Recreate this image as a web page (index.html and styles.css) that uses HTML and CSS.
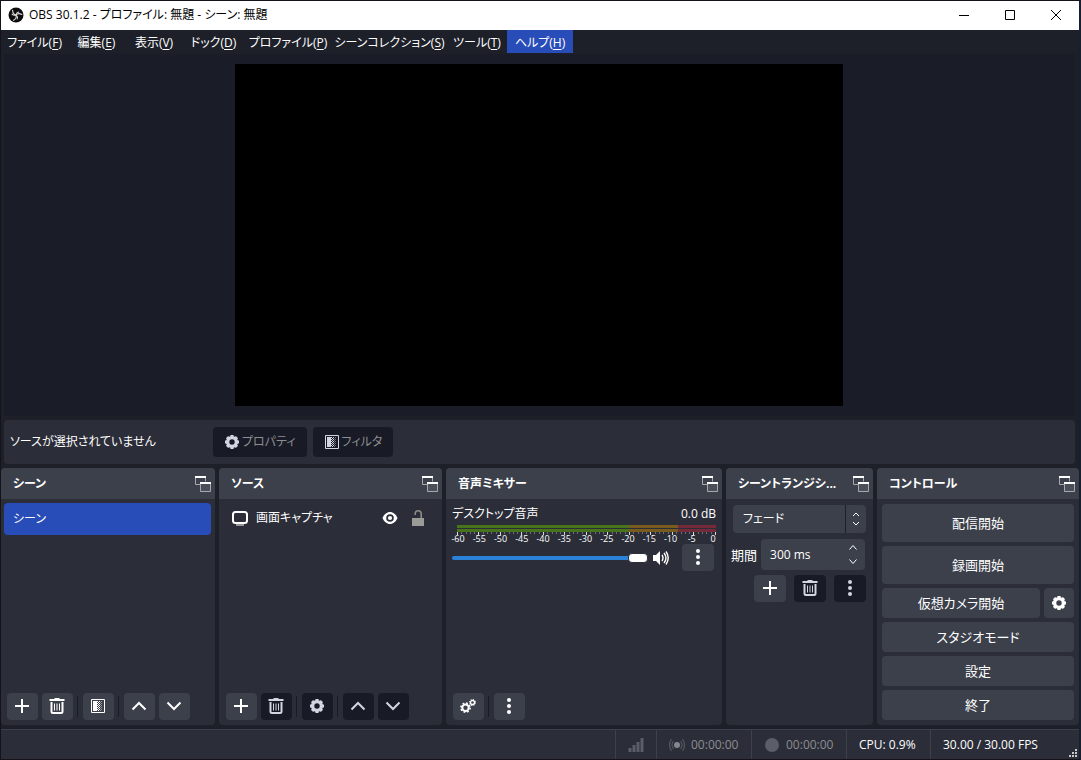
FILE: index.html
```html
<!DOCTYPE html>
<html lang="ja">
<head>
<meta charset="utf-8">
<title>OBS 30.1.2 - プロファイル: 無題 - シーン: 無題</title>
<link rel="stylesheet" href="styles.css">
</head>
<body>
<svg class="sprite" aria-hidden="true">
  <symbol id="plus" viewBox="0 0 16 16"><path d="M8 1v14M1 8h14" fill="none" stroke="currentColor" stroke-width="2"/></symbol>
  <symbol id="trash" viewBox="0 0 16 16"><path d="M.5 2h15M5.500 1h5" fill="none" stroke="currentColor" stroke-width="2"/><path d="M2.500 4v9.500a1.500 1.500 0 0 0 1.500 1.500h8a1.500 1.500 0 0 0 1.500-1.500V4" fill="none" stroke="currentColor" stroke-width="2"/><path d="M5.500 5.500v7M8 5.500v7M10.500 5.500v7" stroke="currentColor"/></symbol>
  <symbol id="filter" viewBox="0 0 16 16"><path d="M1.500 1.500h13v13h-13z" fill="none" stroke="currentColor"/><path d="M3 3h4v10H3z" fill="currentColor"/><path d="M7.500 3v10M9.500 3v10" stroke="currentColor" stroke-dasharray="1 1"/><path d="M8.500 4v9" stroke="currentColor" stroke-dasharray="1 1"/><path d="M10.500 4v9M11.500 3v10" stroke="currentColor" stroke-dasharray="1 1" opacity=".45"/></symbol>
  <symbol id="up" viewBox="0 0 16 16"><path d="M1.500 11.500 8 5l6.500 6.500" fill="none" stroke="currentColor" stroke-width="2"/></symbol>
  <symbol id="down" viewBox="0 0 16 16"><path d="M1.500 4.500 8 11l6.500-6.500" fill="none" stroke="currentColor" stroke-width="2"/></symbol>
  <symbol id="gear" viewBox="0 0 16 16"><circle cx="8" cy="8" r="4.400" fill="none" stroke="currentColor" stroke-width="3.400"/><path d="M8 1v2.500M8 12.500V15M1 8h2.500M12.500 8H15M3.050 3.050l1.800 1.800M11.150 11.150l1.800 1.800M3.050 12.950l1.800-1.800M11.150 4.850l1.800-1.800" stroke="currentColor" stroke-width="3.200"/></symbol>
  <symbol id="gears" viewBox="0 0 16 16"><circle cx="5.500" cy="9.700" r="3.200" fill="none" stroke="currentColor" stroke-width="2"/><circle cx="5.500" cy="9.700" r="4.600" fill="none" stroke="currentColor" stroke-width="1.600" stroke-dasharray="1.800 1.813"/><circle cx="12.500" cy="4.500" r="2" fill="none" stroke="currentColor" stroke-width="1.300"/><circle cx="12.500" cy="4.500" r="2.900" fill="none" stroke="currentColor" stroke-width="1.200" stroke-dasharray="1.100 1.178"/></symbol>
  <symbol id="dots" viewBox="0 0 16 16"><g fill="currentColor"><circle cx="8" cy="2" r="2"/><circle cx="8" cy="8" r="2"/><circle cx="8" cy="14" r="2"/></g></symbol>
  <symbol id="float" viewBox="0 0 16 16"><path d="M5.500 8.500h-5v-8h10v5" fill="none" stroke="#a6a8ae"/><path d="M0 0h11v2H0z" fill="#fff"/><path d="M5.500 6.500h10v9h-10z" fill="#4b4f59" stroke="#a6a8ae"/><path d="M5 6h11v2H5z" fill="#fff"/></symbol>
  <symbol id="logo" viewBox="0 0 16 16"><circle cx="8" cy="8" r="7.500" fill="#0d0d0d"/><g fill="none" stroke="#dcdcdc" stroke-width="1.100" stroke-linecap="round"><path id="blade" d="M4.600 3.200c0 2.500 1.200 4.300 3.400 4.800.3-1.500 1.300-2.700 2.800-3"/><use href="#blade" transform="rotate(120 8 8)"/><use href="#blade" transform="rotate(240 8 8)"/></g></symbol>
</svg>

<div class="window">
  <header class="titlebar">
    <svg class="icon"><use href="#logo"/></svg>
    <h1>OBS 30.1.2 - プロファイル: 無題 - シーン: 無題</h1>
    <button class="caption" aria-label="最小化"><svg class="cap-icon" viewBox="0 0 10 10"><path d="M0 5.500h10"/></svg></button>
    <button class="caption" aria-label="最大化"><svg class="cap-icon" viewBox="0 0 10 10"><path d="M.5.5h9v9h-9z"/></svg></button>
    <button class="caption" aria-label="閉じる"><svg class="cap-icon" viewBox="0 0 10 10"><path d="m0 0 10 10M10 0 0 10"/></svg></button>
  </header>

  <nav class="menubar">
    <button>ファイル(<u>F</u>)</button>
    <button>編集(<u>E</u>)</button>
    <button>表示(<u>V</u>)</button>
    <button>ドック(<u>D</u>)</button>
    <button>プロファイル(<u>P</u>)</button>
    <button>シーンコレクション(<u>S</u>)</button>
    <button>ツール(<u>T</u>)</button>
    <button class="active">ヘルプ(<u>H</u>)</button>
  </nav>

  <main class="preview"><div class="canvas"></div></main>

  <section class="context">
    <span class="context-label">ソースが選択されていません</span>
    <button class="btn dark" disabled><svg class="icon"><use href="#gear"/></svg>プロパティ</button>
    <button class="btn dark" disabled><svg class="icon"><use href="#filter"/></svg>フィルタ</button>
  </section>

  <div class="docks">
    <section class="dock">
      <header><h2>シーン</h2><button class="float" aria-label="フロート"><svg class="icon"><use href="#float"/></svg></button></header>
      <ul class="list"><li class="selected">シーン</li></ul>
      <div class="tools">
        <button class="btn tool" aria-label="追加"><svg class="icon"><use href="#plus"/></svg></button>
        <button class="btn tool" aria-label="削除"><svg class="icon"><use href="#trash"/></svg></button>
        <i class="sep"></i>
        <button class="btn tool" aria-label="フィルタ"><svg class="icon"><use href="#filter"/></svg></button>
        <i class="sep"></i>
        <button class="btn tool" aria-label="上へ"><svg class="icon"><use href="#up"/></svg></button>
        <button class="btn tool" aria-label="下へ"><svg class="icon"><use href="#down"/></svg></button>
      </div>
    </section>

    <section class="dock">
      <header><h2>ソース</h2><button class="float" aria-label="フロート"><svg class="icon"><use href="#float"/></svg></button></header>
      <ul class="list">
        <li class="source">
          <svg class="icon" viewBox="0 0 16 16"><rect x="1" y="2" width="14" height="11" rx="2.500" fill="none" stroke="#fff" stroke-width="2"/><path d="M4 15h8" stroke="#fff"/></svg>
          <span>画面キャプチャ</span>
          <button class="mini" aria-label="表示"><svg class="icon" viewBox="0 0 16 16"><path d="M.5 8C2 4.500 4.800 2 8 2S14 4.500 15.500 8C14 11.500 11.200 14 8 14S2 11.500.5 8z" fill="#fff"/><circle cx="8" cy="8" r="3.800" fill="#2b2d38"/><circle cx="8" cy="8" r="2.100" fill="#fff"/></svg></button>
          <button class="mini" aria-label="ロック"><svg class="icon" viewBox="0 0 16 16"><path d="M2 8h12v8H2z" fill="#9b9b96"/><path d="M5.200 5V3.800a3 3 0 0 1 6 0V8" fill="none" stroke="#8b8b87" stroke-width="1.600"/></svg></button>
        </li>
      </ul>
      <div class="tools">
        <button class="btn tool" aria-label="追加"><svg class="icon"><use href="#plus"/></svg></button>
        <button class="btn tool dark" aria-label="削除" disabled><svg class="icon"><use href="#trash"/></svg></button>
        <i class="sep"></i>
        <button class="btn tool dark" aria-label="プロパティ" disabled><svg class="icon"><use href="#gear"/></svg></button>
        <i class="sep"></i>
        <button class="btn tool dark" aria-label="上へ" disabled><svg class="icon"><use href="#up"/></svg></button>
        <button class="btn tool dark" aria-label="下へ" disabled><svg class="icon"><use href="#down"/></svg></button>
      </div>
    </section>

    <section class="dock">
      <header><h2>音声ミキサー</h2><button class="float" aria-label="フロート"><svg class="icon"><use href="#float"/></svg></button></header>
      <div class="mixer">
        <div class="mixer-head"><label for="vol">デスクトップ音声</label><span>0.0 dB</span></div>
        <div class="meter"></div>
        <div class="meter"></div>
        <div class="ticks"></div>
        <div class="scale"><span>-60</span><span>-55</span><span>-50</span><span>-45</span><span>-40</span><span>-35</span><span>-30</span><span>-25</span><span>-20</span><span>-15</span><span>-10</span><span>-5</span><span>0</span></div>
        <div class="volume">
          <input id="vol" type="range" min="0" max="100" value="100">
          <button class="mini" aria-label="ミュート"><svg class="icon" viewBox="0 0 16 16"><path d="M0 5h3l4-4v14l-4-4H0z" fill="#fff"/><path d="M9 5q2 3 0 6M11 3q4 5 0 10M13 1.500q4.500 6.500 0 13" fill="none" stroke="#fff" stroke-width="1.400"/></svg></button>
          <button class="btn tool" aria-label="メニュー"><svg class="icon"><use href="#dots"/></svg></button>
        </div>
      </div>
      <div class="tools">
        <button class="btn tool" aria-label="オーディオの詳細"><svg class="icon"><use href="#gears"/></svg></button>
        <i class="sep"></i>
        <button class="btn tool" aria-label="メニュー"><svg class="icon"><use href="#dots"/></svg></button>
      </div>
    </section>

    <section class="dock">
      <header><h2>シーントランジシ...</h2><button class="float" aria-label="フロート"><svg class="icon"><use href="#float"/></svg></button></header>
      <div class="transition">
        <div class="combo">
          <select aria-label="トランジション"><option>フェード</option></select>
          <svg class="arrows" viewBox="0 0 8 14"><path d="m1 4 3-3 3 3M1 10l3 3 3-3"/></svg>
        </div>
        <div class="duration">
          <label for="dur">期間</label>
          <div class="spin">
            <input id="dur" type="text" value="300 ms">
            <div class="steps">
              <button aria-label="増やす"><svg viewBox="0 0 8 5"><path d="m.5 4.500 3.500-4 3.500 4"/></svg></button>
              <button aria-label="減らす"><svg viewBox="0 0 8 5"><path d="m.5.5 3.500 4 3.500-4"/></svg></button>
            </div>
          </div>
        </div>
        <div class="row-end">
          <button class="btn tool" aria-label="追加"><svg class="icon"><use href="#plus"/></svg></button>
          <button class="btn tool dark" aria-label="削除" disabled><svg class="icon"><use href="#trash"/></svg></button>
          <button class="btn tool dark" aria-label="メニュー" disabled><svg class="icon"><use href="#dots"/></svg></button>
        </div>
      </div>
    </section>

    <section class="dock">
      <header><h2>コントロール</h2><button class="float" aria-label="フロート"><svg class="icon"><use href="#float"/></svg></button></header>
      <div class="controls">
        <button class="btn tall">配信開始</button>
        <button class="btn tall">録画開始</button>
        <div class="pair">
          <button class="btn">仮想カメラ開始</button>
          <button class="btn cog" aria-label="仮想カメラの設定"><svg class="icon"><use href="#gear"/></svg></button>
        </div>
        <button class="btn">スタジオモード</button>
        <button class="btn">設定</button>
        <button class="btn">終了</button>
      </div>
    </section>
  </div>

  <footer class="status">
    <div class="cell signal"><svg class="icon" viewBox="0 0 16 16"><path d="M2 11v4M6 8v7M10 5v10M14 1v14" stroke="#5b5e68" stroke-width="3"/></svg></div>
    <div class="cell time"><svg class="icon" viewBox="0 0 16 16"><circle cx="8" cy="8" r="3" fill="#85878e"/><path d="M4.500 4q-3 4 0 8M11.500 4q3 4 0 8M2.500 2q-4 6 0 12M13.500 2q4 6 0 12" fill="none" stroke="#53565f" stroke-width="1.200"/></svg><span>00:00:00</span></div>
    <div class="cell time"><svg class="icon" viewBox="0 0 16 16"><circle cx="8" cy="8" r="7" fill="#5b5e68"/></svg><span>00:00:00</span></div>
    <div class="cell cpu">CPU: 0.9%</div>
    <div class="cell fps"><span>30.00 / 30.00 FPS</span><svg class="grip" viewBox="0 0 8 8"><path d="M6 0h2v2H6zM3 3h2v2H3zM6 3h2v2H6zM0 6h2v2H0zM3 6h2v2H3zM6 6h2v2H6z" fill="#c8c8c8"/></svg></div>
  </footer>
</div>
</body>
</html>
```
FILE: styles.css
```css
* { box-sizing: border-box; }

body {
  margin: 0;
  background: #1e2029;
  color: #fff;
  font: 12px/16px "Open Sans", "Noto Sans CJK JP", sans-serif;
  font-feature-settings: "palt";
}

button, input, select {
  font: inherit;
  font-feature-settings: inherit;
  color: inherit;
  border: 0;
  margin: 0;
  padding: 0;
  background: none;
}

h1, h2, ul { margin: 0; padding: 0; font-size: inherit; list-style: none; }

.sprite { display: none; }
.icon { width: 16px; height: 16px; flex: none; display: block; }

.window {
  display: flex;
  flex-direction: column;
  min-height: 100vh;
  border: 1px solid #15121a;
  border-right: 2px solid #16202f;
}

.titlebar {
  display: flex;
  align-items: center;
  height: 29px;
  padding: 0 0 2px 7px;
  background: #fff;
  color: #000;
}
.titlebar h1 { flex: 1; margin-left: 5px; font-weight: 400; }
.caption { width: 46px; height: 27px; display: grid; place-items: center; }
.cap-icon { width: 10px; height: 10px; fill: none; stroke: #000; }

.menubar {
  display: grid;
  grid-template-columns: 67px 57px 58px 61px 88px 115px 60px 66px;
  height: 24px;
}
.menubar button { height: 23px; padding-top: 2px; white-space: nowrap; }
.menubar .active { background: #284cb8; }
.menubar u { text-underline-offset: 2px; }

.preview {
  flex: 1;
  display: flex;
  justify-content: center;
  padding: 10px 1px 10px 0;
  margin: 0 4px 0 3px;
  background: #1a1c27;
}
.canvas { height: 100%; min-height: 342px; aspect-ratio: 16 / 9; background: #000; }

.context {
  display: flex;
  align-items: center;
  gap: 6px;
  height: 44px;
  margin: 4px 4px 4px 3px;
  padding: 0 6px;
  border-radius: 4px;
  background: #2b2d38;
}
.context-label { width: 197px; white-space: nowrap; }
.context .btn { padding: 0 11px; gap: 2px; }

.btn {
  display: flex;
  align-items: center;
  justify-content: center;
  height: 30px;
  border-radius: 4px;
  background: #3c404b;
  white-space: nowrap;
}
.btn.dark { background: #181a25; color: #8d8e92; }
.btn.dark .icon { color: #d2d5e2; }
.btn.tool { width: 31px; height: 27px; padding: 0 1px 1px 0; flex: none; }

.docks {
  display: grid;
  grid-template-columns: 214fr 223fr 276fr 147fr 202fr;
  gap: 4px;
}
.dock {
  display: flex;
  flex-direction: column;
  min-width: 0;
  min-height: 257px;
  border-radius: 4px;
  background: #2b2d38;
  overflow: hidden;
}
.dock header {
  display: flex;
  align-items: center;
  justify-content: space-between;
  height: 31px;
  padding: 0 4px 0 12px;
  background: #3c404b;
}
.dock h2 { white-space: nowrap; }

.list { flex: 1; padding: 4px; }
.dock:first-child .list { padding-left: 3px; }
.list li { display: flex; align-items: center; height: 32px; padding: 0 9px; border-radius: 4px; }
.list .selected { background: #284cb8; }
.list .source { height: 30px; gap: 8px; padding-right: 12px; }
.source span { flex: 1; }
.mini { flex: none; }
.source .mini + .mini { margin-left: 4px; }

.tools { display: flex; align-items: center; gap: 4px; padding: 5px 7px; }
.dock:first-child .tools { padding-left: 6px; }
.sep { width: 2px; height: 21px; border-left: 1px solid #1a1c25; }

.mixer { flex: 1; padding: 7px 6px; }
.mixer-head { display: flex; justify-content: space-between; height: 19px; }
.meter {
  height: 3px;
  margin: 0 0 1px 5px;
  background: linear-gradient(90deg, #47741a 0 66.600%, #7a5b1e 0 85.300%, #742a38 0);
}
.ticks {
  height: 3px;
  margin: -1px 0 0 5px;
  background:
    repeating-linear-gradient(90deg, #d8d8d8 0 1px, transparent 1px calc((100% - 1px) / 12)),
    repeating-linear-gradient(90deg, #6c6e76 0 1px, transparent 1px calc((100% - 1px) / 60)) 0 0 / 100% 2px no-repeat;
}
.scale {
  display: flex;
  justify-content: space-between;
  margin: -1px -4px 0 -1px;
  font-size: 9px;
  line-height: 9px;
}
.scale span { width: 14px; text-align: center; }
.volume { display: flex; align-items: center; margin-top: 1px; }
.volume input {
  flex: 1;
  min-width: 0;
  height: 16px;
  margin-right: 5px;
  appearance: none;
}
.volume input::-webkit-slider-runnable-track {
  height: 4px;
  border-radius: 2px;
  background: #2a82da;
}
.volume input::-webkit-slider-thumb {
  appearance: none;
  width: 20px;
  height: 10px;
  margin-top: -3px;
  border: 1px solid #2b2d38;
  border-radius: 4px;
  background: #fff;
}
.volume .btn.tool { width: 32px; margin: 0 2px 0 13px; }

.transition { display: flex; flex-direction: column; padding: 6px 7px; }
.combo { display: grid; align-items: center; }
.combo select {
  grid-area: 1 / 1;
  width: 100%;
  height: 28px;
  padding-left: 10px;
  border-radius: 4px;
  appearance: none;
  background: linear-gradient(90deg, #3c404b calc(100% - 21px), #1e2029 0 calc(100% - 20px), #3c404b 0);
}
.arrows {
  grid-area: 1 / 1;
  justify-self: end;
  width: 8px;
  height: 14px;
  margin-right: 6px;
  pointer-events: none;
}
.arrows, .steps svg { fill: none; stroke: #fff; }
.duration { display: flex; align-items: center; gap: 4px; margin: 6px 1px 5px -2px; }
.duration label { flex: none; font-size: 13px; }
.spin { flex: 1; display: flex; min-width: 0; height: 31px; border-radius: 4px; background: #3c404b; }
.spin input { flex: 1; min-width: 0; padding-left: 9px; }
.steps { display: flex; flex-direction: column; justify-content: center; gap: 9px; width: 16px; }
.steps button { height: 5px; }
.steps svg { display: block; width: 8px; height: 5px; overflow: visible; }
.row-end { display: flex; justify-content: flex-end; gap: 8px; }
.row-end .btn.tool { width: 32px; }

.controls { display: flex; flex-direction: column; gap: 4px; padding: 5px; font-size: 13px; }
.tall { height: 38px; }
.pair { display: flex; gap: 4px; }
.pair .btn:first-child { flex: 1; }
.pair .cog { width: 30px; }

.status {
  display: flex;
  justify-content: flex-end;
  height: 30px;
  margin-top: 4px;
  border-top: 1px solid #3c404b;
  background: #2b2d38;
}
.cell {
  display: flex;
  align-items: center;
  gap: 6px;
  padding: 0 12px;
  border-left: 1px solid #3c404b;
}
.time { min-width: 95px; color: #8d8e92; }
.cpu { min-width: 84px; }
.fps { min-width: 149px; padding-right: 2px; justify-content: space-between; }
.grip { align-self: flex-end; width: 8px; height: 8px; margin-bottom: 2px; }
```
